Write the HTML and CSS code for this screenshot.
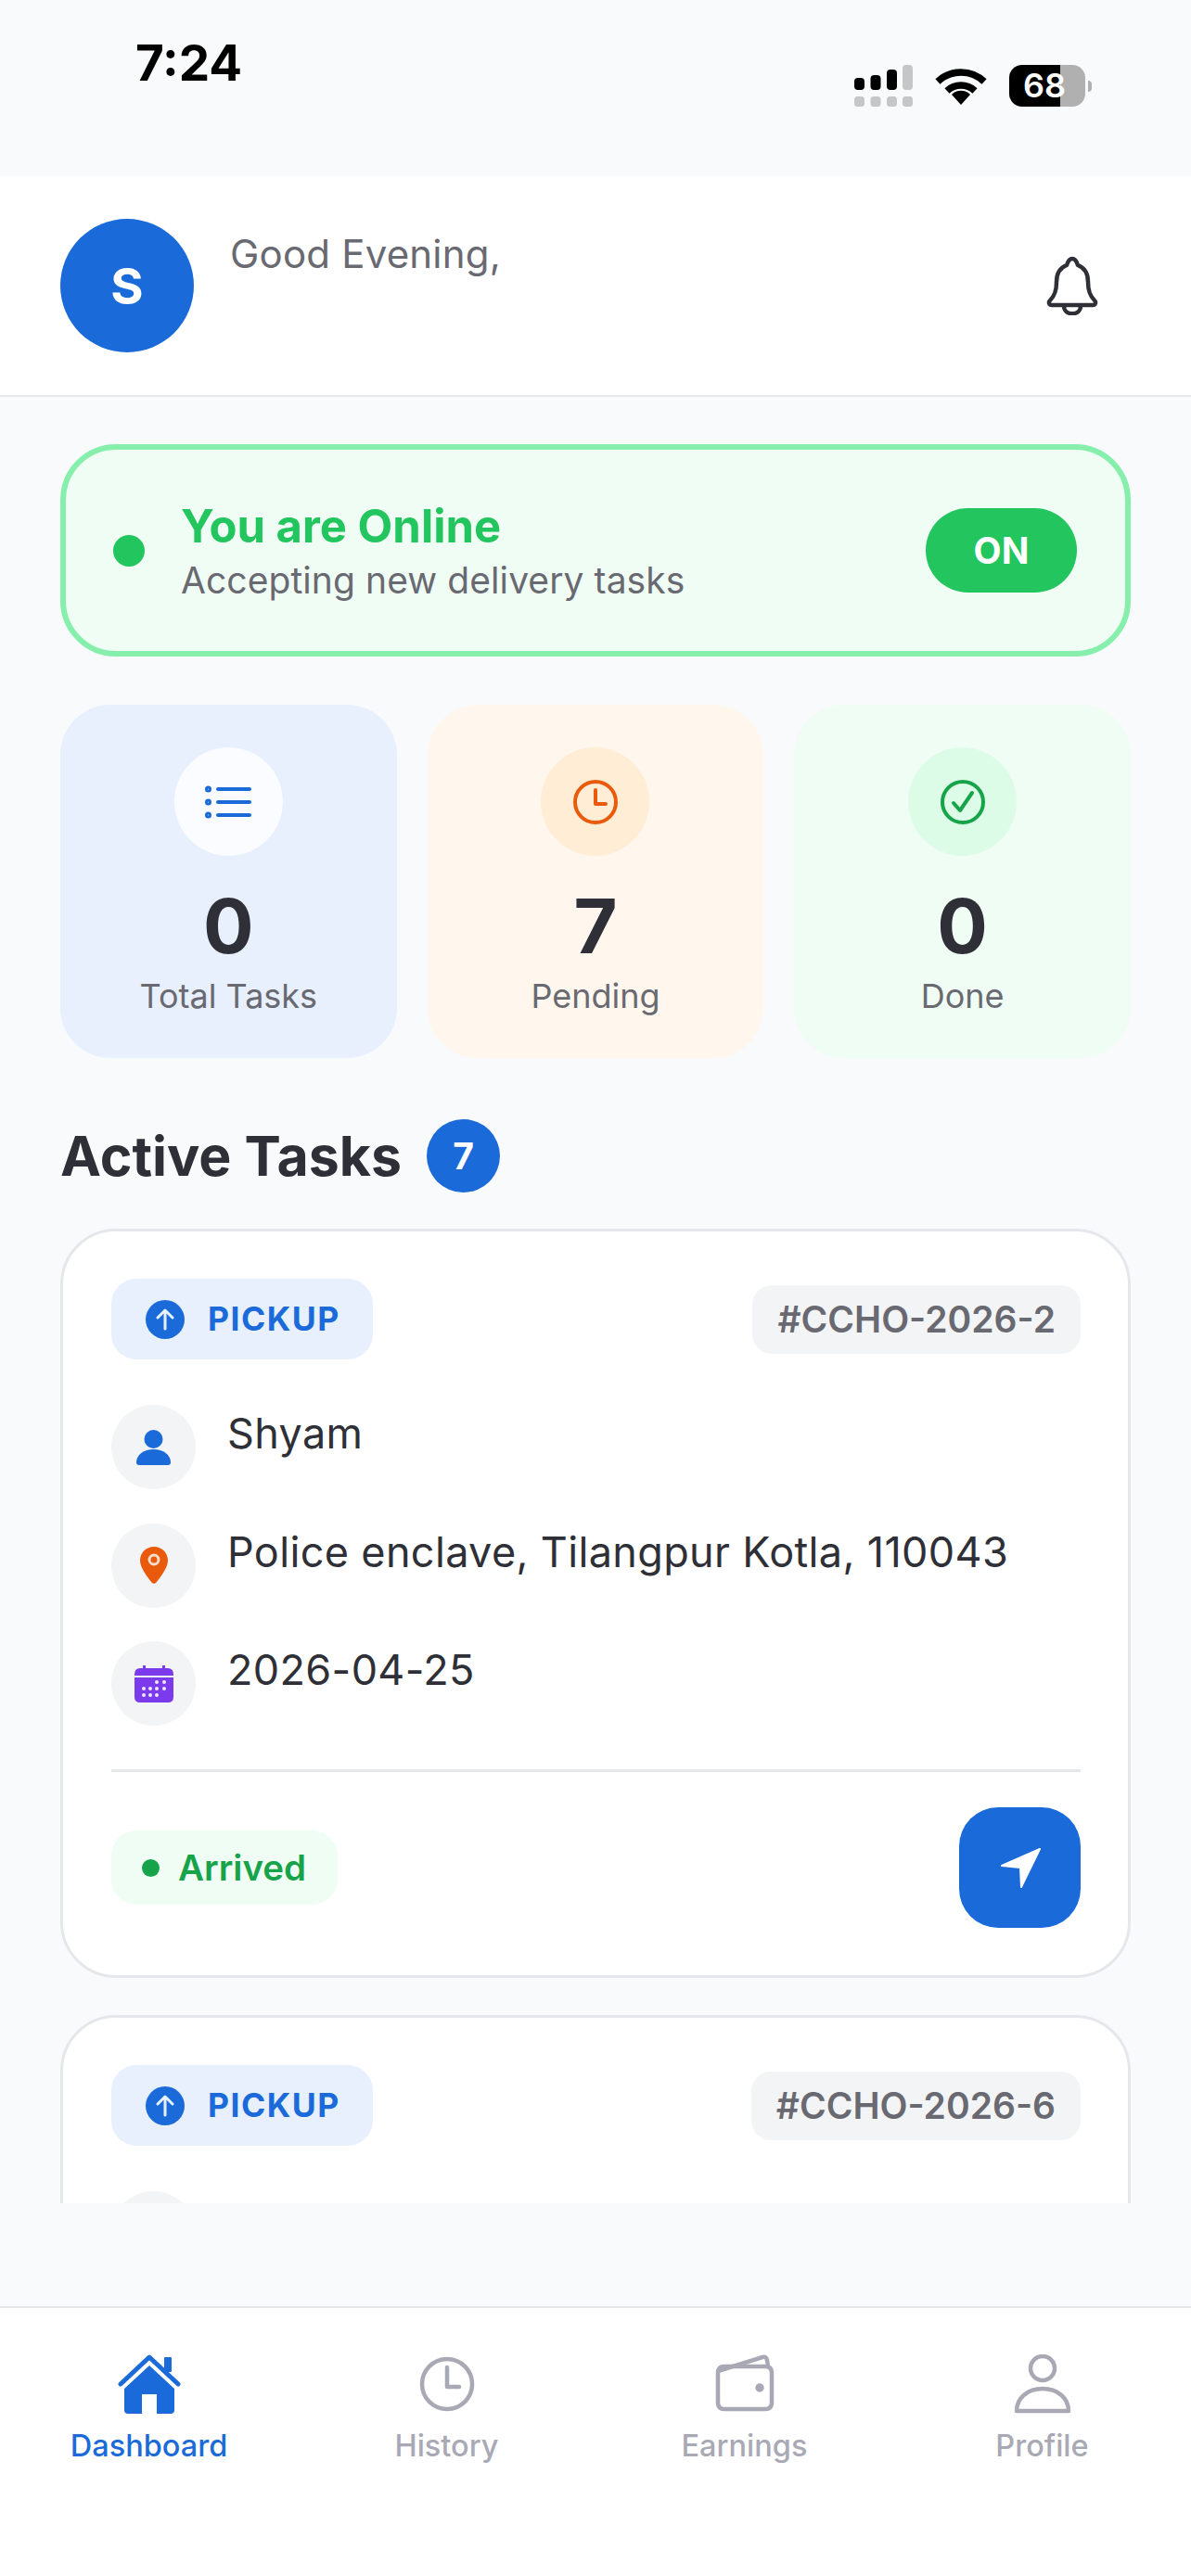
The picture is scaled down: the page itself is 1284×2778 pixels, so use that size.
FILE: index.html
```html
<!DOCTYPE html>
<html lang="en">
<head>
    <meta charset="UTF-8">
    <title>Dashboard</title>
    <meta name="viewport" content="width=device-width, initial-scale=1.0">
    <link rel="stylesheet" href="styles.css">
</head>
<body>
    <div class="page">
        <div class="status-bar">
            <div class="status-time">7:24</div>
            <div class="status-icons">
                <svg class="signal" width="63" height="45" viewBox="0 0 63 45">
                    <rect x="0" y="14" width="11" height="13" rx="4" fill="#000"/>
                    <rect x="17.5" y="11" width="11" height="16" rx="4" fill="#000"/>
                    <rect x="35" y="5" width="11" height="22" rx="4" fill="#000"/>
                    <rect x="52" y="0" width="11" height="27" rx="4" fill="#c6c6c8"/>
                    <rect x="0" y="34" width="11" height="11" rx="3.5" fill="#c6c6c8"/>
                    <rect x="17.5" y="34" width="11" height="11" rx="3.5" fill="#c6c6c8"/>
                    <rect x="35" y="34" width="11" height="11" rx="3.5" fill="#c6c6c8"/>
                    <rect x="52" y="34" width="11" height="11" rx="3.5" fill="#c6c6c8"/>
                </svg>
                <svg class="wifi" width="56" height="41" viewBox="0 0 56 41">
                    <path d="M3 16 A36 36 0 0 1 53 16" fill="none" stroke="#000" stroke-width="7.5"/>
                    <path d="M13 26 A22 22 0 0 1 43 26" fill="none" stroke="#000" stroke-width="7.5"/>
                    <path d="M18 30 A14 14 0 0 1 38 30 L28 41 Z" fill="#000"/>
                </svg>
                <div class="battery"><span>68</span></div>
                <div class="battery-nub"></div>
            </div>
        </div>

        <header class="top-header">
            <div class="avatar">S</div>
            <div class="greeting">Good Evening,</div>
            <svg class="bell" width="56" height="64" viewBox="0 0 56 64" fill="none" stroke="#2f3037" stroke-width="4.5" stroke-linejoin="round" stroke-linecap="round">
                <path d="M28 3 C24 3 23 7 22 10 C14 13 11 20 11 28 C11 38 9 43 4 48 C2 50 3 53 6 53 H50 C53 53 54 50 52 48 C47 43 45 38 45 28 C45 20 42 13 34 10 C33 7 32 3 28 3 Z"/>
                <path d="M19 54 C19 65 37 65 37 54"/>
            </svg>
        </header>

        <main class="content">
            <section class="online-card">
                <div class="online-dot"></div>
                <div class="online-text">
                    <div class="online-title">You are Online</div>
                    <div class="online-sub">Accepting new delivery tasks</div>
                </div>
                <div class="online-toggle">ON</div>
            </section>

            <section class="stats">
                <div class="stat stat-blue">
                    <div class="stat-icon">
                        <svg width="50" height="36" viewBox="0 0 50 36" fill="none" stroke="#1a6ad9" stroke-width="4" stroke-linecap="round">
                            <path d="M14 4 H48 M14 18 H48 M14 32 H48"/>
                            <circle cx="3.5" cy="4" r="1.5"/><circle cx="3.5" cy="18" r="1.5"/><circle cx="3.5" cy="32" r="1.5"/>
                        </svg>
                    </div>
                    <div class="stat-num">0</div>
                    <div class="stat-label">Total Tasks</div>
                </div>
                <div class="stat stat-orange">
                    <div class="stat-icon">
                        <svg width="48" height="48" viewBox="0 0 48 48" fill="none" stroke="#ea5a0c" stroke-width="4" stroke-linecap="round" stroke-linejoin="round">
                            <circle cx="24" cy="24" r="22"/>
                            <path d="M24 11 V26 H35"/>
                        </svg>
                    </div>
                    <div class="stat-num">7</div>
                    <div class="stat-label">Pending</div>
                </div>
                <div class="stat stat-green">
                    <div class="stat-icon">
                        <svg width="48" height="48" viewBox="0 0 48 48" fill="none" stroke="#16a34a" stroke-width="4" stroke-linecap="round" stroke-linejoin="round">
                            <circle cx="24" cy="24" r="22"/>
                            <path d="M14 25 L21 33 L34 14"/>
                        </svg>
                    </div>
                    <div class="stat-num">0</div>
                    <div class="stat-label">Done</div>
                </div>
            </section>

            <div class="section-title">
                <h2>Active Tasks</h2>
                <span class="count">7</span>
            </div>

            <article class="task">
                <div class="task-head">
                    <div class="kind">
                        <span class="kind-icon">
                            <svg width="22" height="24" viewBox="0 0 22 24" fill="none" stroke="#e8f0fe" stroke-width="3" stroke-linecap="round" stroke-linejoin="round"><path d="M11 22 V3 M3 10 L11 2 L19 10"/></svg>
                        </span>
                        PICKUP
                    </div>
                    <div class="task-id">#CCHO-2026-2</div>
                </div>
                <div class="task-rows">
                    <div class="task-row">
                        <span class="row-icon">
                            <svg width="37" height="38" viewBox="0 0 37 38" fill="#1a6ad9"><circle cx="18.500" cy="10" r="10"/><path d="M0 35 C0 27 8 21 18.500 21 C29 21 37 27 37 35 Q37 38 34 38 H3 Q0 38 0 35 Z"/></svg>
                        </span>
                        <span class="row-text">Shyam</span>
                    </div>
                    <div class="task-row">
                        <span class="row-icon">
                            <svg width="30" height="40" viewBox="0 0 30 40"><path d="M15 0 C6.500 0 0 6.500 0 15 C0 23 9 34 12.500 38.500 Q15 41 17.500 38.500 C21 34 30 23 30 15 C30 6.500 23.500 0 15 0 Z" fill="#ea5a0c"/><circle cx="15" cy="14" r="5" fill="none" stroke="#f6dccb" stroke-width="3"/></svg>
                        </span>
                        <span class="row-text">Police enclave, Tilangpur Kotla, 110043</span>
                    </div>
                    <div class="task-row">
                        <span class="row-icon">
                            <svg width="42" height="41" viewBox="0 0 42 41">
                                <path d="M0 11 Q0 4 6 4 H9 V1 H12 V4 H30 V1 H33 V4 H36 Q42 4 42 11 V12 H0 Z" fill="#7c3aed"/>
                                <path d="M0 14 H42 V35 Q42 41 36 41 H6 Q0 41 0 35 Z" fill="#7c3aed"/>
                                <g fill="#efe6fd"><circle cx="24" cy="19" r="2"/><circle cx="32" cy="19" r="2"/><circle cx="10" cy="26" r="2"/><circle cx="17" cy="26" r="2"/><circle cx="24" cy="26" r="2"/><circle cx="32" cy="26" r="2"/><circle cx="10" cy="33" r="2"/><circle cx="17" cy="33" r="2"/><circle cx="24" cy="33" r="2"/></g>
                            </svg>
                        </span>
                        <span class="row-text">2026-04-25</span>
                    </div>
                </div>
                <div class="task-foot">
                    <div class="state"><span class="state-dot"></span>Arrived</div>
                    <div class="go">
                        <svg width="48" height="48" viewBox="0 0 48 48" fill="#fff" stroke="#fff" stroke-width="2" stroke-linejoin="round"><path d="M45 4 L4 22 L24 24 L25 45 Z"/></svg>
                    </div>
                </div>
            </article>

            <article class="task">
                <div class="task-head">
                    <div class="kind">
                        <span class="kind-icon">
                            <svg width="22" height="24" viewBox="0 0 22 24" fill="none" stroke="#e8f0fe" stroke-width="3" stroke-linecap="round" stroke-linejoin="round"><path d="M11 22 V3 M3 10 L11 2 L19 10"/></svg>
                        </span>
                        PICKUP
                    </div>
                    <div class="task-id">#CCHO-2026-6</div>
                </div>
                <div class="task-rows">
                    <div class="task-row"><span class="row-icon"></span></div>
                </div>
            </article>
        </main>

        <div class="nav-gap"></div>

        <nav class="bottom-nav">
            <div class="nav-item active">
                <svg width="68" height="64" viewBox="0 0 68 64" fill="#1a6ad9">
                    <path d="M34 12 L7 37 V60 Q7 64 11 64 H26 V43 H42 V64 H57 Q61 64 61 60 V37 Z"/>
                    <path d="M3 32 L34 3 L65 32" fill="none" stroke="#1a6ad9" stroke-width="5" stroke-linecap="round" stroke-linejoin="round"/>
                    <rect x="50" y="3" width="8" height="16" rx="1"/>
                </svg>
                <span>Dashboard</span>
            </div>
            <div class="nav-item">
                <svg width="68" height="64" viewBox="0 0 68 64" fill="none" stroke="#a9a9b5" stroke-width="4.500" stroke-linecap="round" stroke-linejoin="round">
                    <circle cx="34" cy="32" r="27"/>
                    <path d="M34 14 V35 H47"/>
                </svg>
                <span>History</span>
            </div>
            <div class="nav-item">
                <svg width="68" height="64" viewBox="0 0 68 64" fill="none" stroke="#a9a9b5" stroke-width="4.500" stroke-linecap="round" stroke-linejoin="round">
                    <path d="M5 18 L53 3 Q57 2 58 6 L59 13"/>
                    <path d="M5 20 Q5 13 12 13 H56 Q63 13 63 20 V52 Q63 59 56 59 H12 Q5 59 5 52 Z"/>
                    <circle cx="50" cy="36" r="2.500" fill="#a9a9b5"/>
                </svg>
                <span>Earnings</span>
            </div>
            <div class="nav-item">
                <svg width="68" height="64" viewBox="0 0 68 64" fill="none" stroke="#a9a9b5" stroke-width="4.500" stroke-linecap="round" stroke-linejoin="round">
                    <circle cx="34" cy="15" r="13"/>
                    <path d="M6 61 C6 47 18 37 34 37 C50 37 62 47 62 61 Z"/>
                </svg>
                <span>Profile</span>
            </div>
        </nav>
    </div>
</body>
</html>
```

FILE: styles.css
```css
* {
    box-sizing: border-box;
}
body {
    margin: 0;
    background: #f9fafb;
    font-family: 'Inter', 'Liberation Sans', sans-serif;
    color: #2f3037;
}
.page {
    height: 2778px;
    display: flex;
    flex-direction: column;
    overflow: hidden;
}

/* status bar */
.status-bar {
    height: 190px;
    flex: none;
    display: flex;
    justify-content: space-between;
    align-items: flex-start;
    padding: 0 107px 0 146px;
}
.status-time {
    margin-top: 38px;
    font-size: 53px;
    line-height: 60px;
    font-weight: 700;
    color: #000;
}
.status-icons {
    margin-top: 70px;
    display: flex;
    align-items: flex-start;
}
.wifi {
    margin: 2px 24px 0 24px;
}
.battery {
    width: 82px;
    height: 45px;
    border-radius: 14px;
    background: linear-gradient(90deg, #000 67%, #b0b0b0 67%);
    color: #fff;
    font-size: 36px;
    font-weight: 600;
    line-height: 45px;
    padding-left: 15px;
}
.battery-nub {
    width: 4px;
    height: 12px;
    margin: 17px 0 0 3px;
    border-radius: 0 6px 6px 0;
    background: #b0b0b0;
}

/* header */
.top-header {
    height: 238px;
    flex: none;
    background: #fff;
    border-bottom: 2px solid #e5e7eb;
    display: flex;
    align-items: flex-start;
    padding: 46px 100px 0 65px;
}
.avatar {
    width: 144px;
    height: 144px;
    border-radius: 50%;
    background: #1a6ad9;
    color: #fff;
    font-size: 54px;
    font-weight: 700;
    display: flex;
    align-items: center;
    justify-content: center;
}
.greeting {
    margin: 12px 0 0 39px;
    flex: 1;
    font-size: 42px;
    line-height: 52px;
    letter-spacing: 0.2px;
    color: #696972;
}
.bell {
    margin-top: 40px;
}

/* scrolling part */
.content {
    height: 1948px;
    flex: none;
    overflow: hidden;
    padding: 51px 65px 0 65px;
}
.nav-gap {
    flex: 1;
}
.online-card {
    height: 229px;
    background: #f0fdf4;
    border: 6px solid #86efac;
    border-radius: 60px;
    display: flex;
    align-items: center;
    padding: 0 52px 0 51px;
}
.online-dot {
    width: 34px;
    height: 34px;
    border-radius: 50%;
    background: #22c55e;
}
.online-text {
    flex: 1;
    margin-left: 39px;
}
.online-title {
    margin-top: 2px;
    font-size: 49px;
    line-height: 62px;
    font-weight: 700;
    color: #22c55e;
}
.online-sub {
    margin-top: 1px;
    font-size: 39px;
    line-height: 52px;
    letter-spacing: 0.08px;
    color: #696972;
}
.online-toggle {
    width: 163px;
    height: 91px;
    border-radius: 46px;
    background: #22c55e;
    color: #fff;
    font-size: 39px;
    font-weight: 700;
    display: flex;
    align-items: center;
    justify-content: center;
}

/* stats */
.stats {
    margin-top: 52px;
    display: grid;
    grid-template-columns: 1fr 1fr 1fr;
    gap: 33px;
}
.stat {
    height: 381px;
    border-radius: 54px;
    padding-top: 46px;
    display: flex;
    flex-direction: column;
    align-items: center;
}
.stat-blue { background: #e8f0fe; }
.stat-orange { background: #fff7ed; }
.stat-green { background: #f0fdf4; }
.stat-icon {
    width: 117px;
    height: 117px;
    border-radius: 50%;
    display: flex;
    align-items: center;
    justify-content: center;
}
.stat-blue .stat-icon { background: rgba(255,255,255,0.8); }
.stat-orange .stat-icon { background: #ffedd5; }
.stat-green .stat-icon { background: #dcfce7; }
.stat-num {
    margin-top: 28px;
    font-size: 81px;
    line-height: 96px;
    font-weight: 700;
}
.stat-label {
    margin-top: 3px;
    font-size: 36px;
    line-height: 48px;
    color: #696972;
}

/* active tasks */
.section-title {
    margin-top: 66px;
    display: flex;
    align-items: center;
    gap: 27px;
}
.section-title h2 {
    margin: 0;
    font-size: 59px;
    font-weight: 700;
}
.count {
    width: 79px;
    height: 79px;
    border-radius: 50%;
    background: #1a6ad9;
    color: #fff;
    font-size: 39px;
    font-weight: 700;
    display: flex;
    align-items: center;
    justify-content: center;
}
.task {
    margin-top: 39px;
    background: #fff;
    border: 3px solid #e5e7eb;
    border-radius: 60px;
    padding: 51px 51px 51px 52px;
}
.task + .task {
    margin-top: 40px;
}
.task-head {
    display: flex;
    justify-content: space-between;
    align-items: center;
}
.kind {
    height: 87px;
    padding: 0 35px 0 37px;
    border-radius: 27px;
    background: #e8f0fe;
    color: #1a6ad9;
    font-size: 35.5px;
    font-weight: 700;
    letter-spacing: 1.5px;
    display: flex;
    align-items: center;
    gap: 25px;
}
.kind-icon {
    width: 42px;
    height: 42px;
    border-radius: 50%;
    background: #1a6ad9;
    display: flex;
    align-items: center;
    justify-content: center;
}
.task-id {
    height: 74px;
    padding: 0 27px;
    border-radius: 21px;
    background: #f3f4f6;
    color: #696972;
    font-size: 39px;
    font-weight: 600;
    display: flex;
    align-items: center;
}
.task-rows {
    margin-top: 49px;
    display: flex;
    flex-direction: column;
    gap: 36.5px;
}
.task-row {
    display: flex;
    align-items: flex-start;
    gap: 34px;
}
.row-icon {
    width: 91px;
    height: 91px;
    flex: none;
    border-radius: 50%;
    background: #f3f4f6;
    display: flex;
    align-items: center;
    justify-content: center;
}
.row-text {
    margin-top: 1px;
    font-size: 45px;
    line-height: 60px;
    letter-spacing: 0.35px;
}
.task-foot {
    margin-top: 47px;
    padding-top: 38px;
    border-top: 3px solid #e5e7eb;
    display: flex;
    justify-content: space-between;
    align-items: center;
}
.state {
    height: 80px;
    padding: 0 34px 0 33px;
    border-radius: 27px;
    background: #f0fdf4;
    color: #16a34a;
    font-size: 38.5px;
    font-weight: 600;
    display: flex;
    align-items: center;
    gap: 20px;
}
.state-dot {
    width: 19px;
    height: 19px;
    border-radius: 50%;
    background: #16a34a;
}
.go {
    width: 131px;
    height: 130px;
    border-radius: 42px;
    background: #1a6ad9;
    display: flex;
    align-items: center;
    justify-content: center;
}

/* bottom nav */
.bottom-nav {
    height: 291px;
    flex: none;
    background: #fff;
    border-top: 2px solid #e5e7eb;
    display: grid;
    grid-template-columns: repeat(4, 1fr);
    padding-top: 50px;
}
.nav-item {
    display: flex;
    flex-direction: column;
    align-items: center;
    color: #a9a9b5;
    font-size: 32.5px;
    font-weight: 500;
}
.nav-item span {
    margin-top: 13px;
    line-height: 44px;
}
.nav-item.active {
    color: #1a6ad9;
}
```
